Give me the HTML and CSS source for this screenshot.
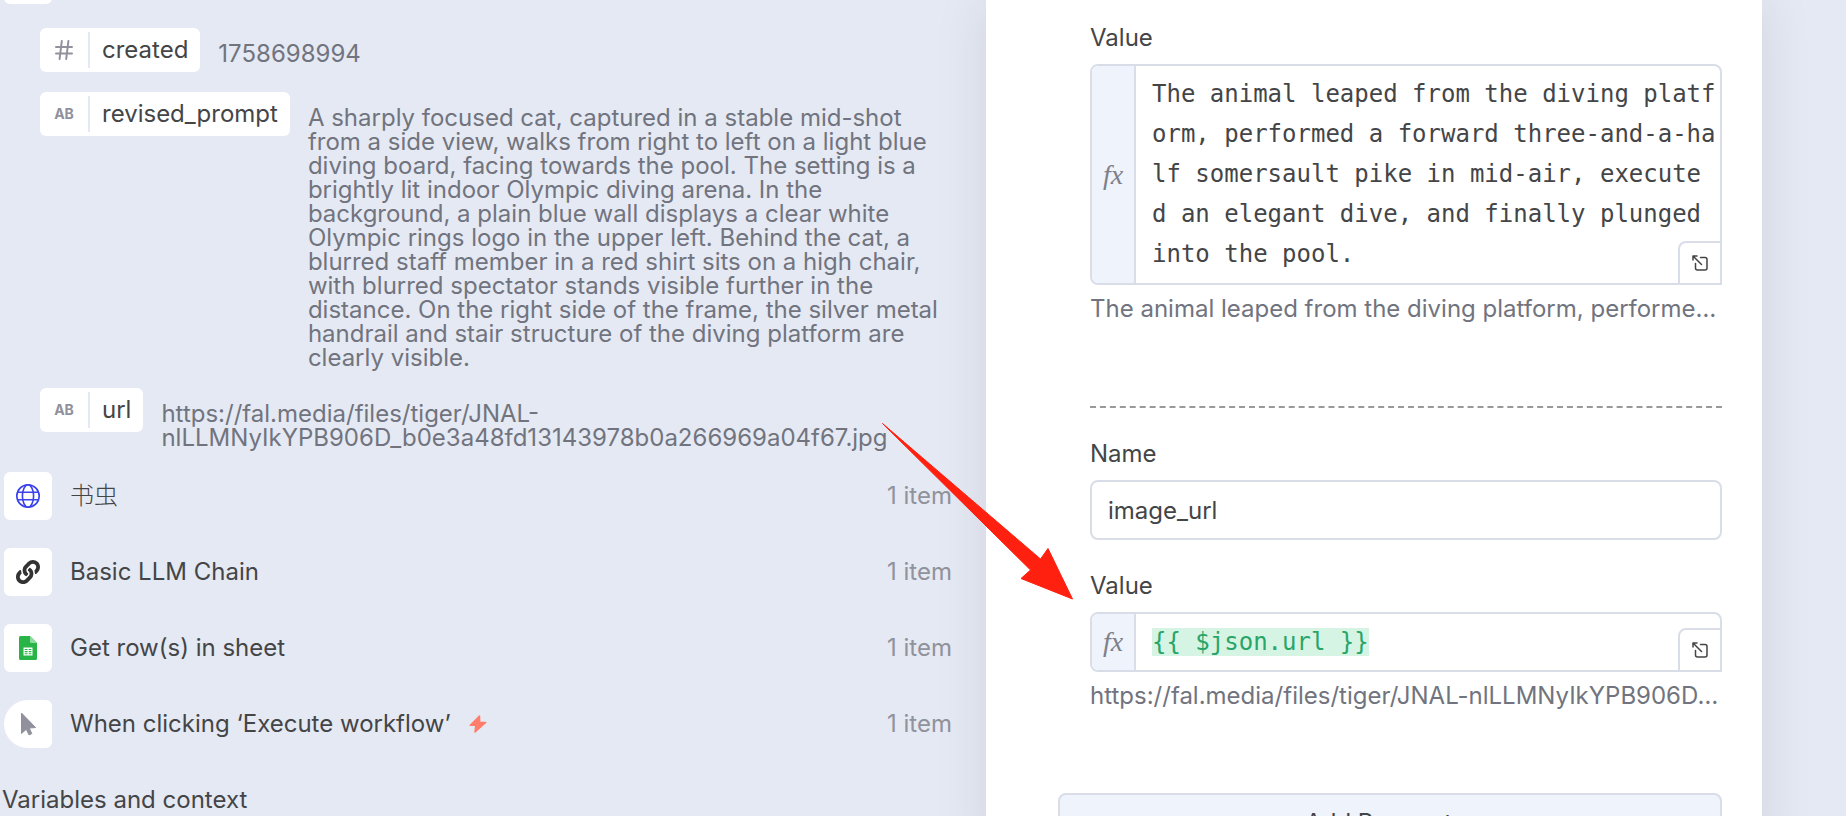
FILE: index.html
```
<!DOCTYPE html>
<html lang="en">
<head>
<meta charset="utf-8">
<title>Edit Fields</title>
<link rel="stylesheet" href="styles.css">
</head>
<body>
<main class="workspace">
  <section class="inputs" aria-label="Input data">
    <div class="tile"></div>
    <ul class="fields">
      <li class="field">
        <span class="chip">
          <span class="chip-type">
            <svg width="18" height="20" viewBox="0 0 18 20" fill="none" stroke="currentColor" stroke-width="2" stroke-linecap="round"><path d="M1 7h16M1 13.500h16M6.800 1L4.600 19M13.400 1l-2.200 18"/></svg>
          </span>
          <span class="chip-name">created</span>
        </span>
        <span class="field-value">1758698994</span>
      </li>
      <li class="field">
        <span class="chip"><span class="chip-type">AB</span><span class="chip-name">revised_prompt</span></span>
        <span class="field-value">A sharply focused cat, captured in a stable mid-shot from a side view, walks from right to left on a light blue diving board, facing towards the pool. The setting is a brightly lit indoor Olympic diving arena. In the background, a plain blue wall displays a clear white Olympic rings logo in the upper left. Behind the cat, a blurred staff member in a red shirt sits on a high chair, with blurred spectator stands visible further in the distance. On the right side of the frame, the silver metal handrail and stair structure of the diving platform are clearly visible.</span>
      </li>
      <li class="field">
        <span class="chip"><span class="chip-type">AB</span><span class="chip-name">url</span></span>
        <span class="field-value">https://fal.media/files/tiger/JNAL-nlLLMNyIkYPB906D_b0e3a48fd13143978b0a266969a04f67.jpg</span>
      </li>
    </ul>
    <ul class="nodes">
      <li class="node">
        <span class="tile">
          <svg width="24" height="24" viewBox="0 0 24 24" fill="none" stroke="#3a42e9" stroke-width="1.600"><circle cx="12" cy="12" r="11.200"/><ellipse cx="12" cy="12" rx="5.600" ry="11.200"/><path d="M1.500 8.300h21M1.500 15.700h21"/></svg>
        </span>
        <span class="node-name node-name-cjk">书虫</span>
        <span class="node-count">1 item</span>
      </li>
      <li class="node">
        <span class="tile">
          <svg width="24" height="24" viewBox="0 0 512 512" fill="#333"><path d="M326.612 185.391c59.747 59.809 58.927 155.698.36 214.590-.11.120-.240.250-.360.370l-67.200 67.200c-59.270 59.270-155.699 59.262-214.960 0-59.270-59.260-59.270-155.700 0-214.960l37.106-37.106c9.840-9.840 26.786-3.300 27.294 10.606.648 17.722 3.826 35.527 9.690 52.721 1.986 5.822.567 12.262-3.783 16.612l-13.087 13.087c-28.026 28.026-28.905 73.660-1.155 101.960 28.024 28.579 74.086 28.749 102.325.510l67.200-67.190c28.191-28.191 28.073-73.757 0-101.830-3.701-3.694-7.429-6.564-10.341-8.569a16.037 16.037 0 0 1-6.947-12.606c-.396-10.567 3.348-21.456 11.698-29.806l21.054-21.055c5.521-5.521 14.182-6.199 20.584-1.731a152.482 152.482 0 0 1 20.522 17.197zM467.547 44.449c-59.261-59.262-155.690-59.270-214.960 0l-67.200 67.200c-.120.120-.250.250-.360.370-58.566 58.892-59.387 154.781.360 214.590a152.454 152.454 0 0 0 20.521 17.196c6.402 4.468 15.064 3.789 20.584-1.731l21.054-21.055c8.350-8.350 12.094-19.239 11.698-29.806a16.037 16.037 0 0 0-6.947-12.606c-2.912-2.005-6.640-4.875-10.341-8.569-28.073-28.073-28.191-73.639 0-101.830l67.200-67.190c28.239-28.239 74.300-28.069 102.325.510 27.750 28.300 26.872 73.934-1.155 101.960l-13.087 13.087c-4.350 4.350-5.769 10.790-3.783 16.612 5.864 17.194 9.042 34.999 9.690 52.721.509 13.906 17.454 20.446 27.294 10.606l37.106-37.106c59.271-59.259 59.271-155.699.001-214.959z"/></svg>
        </span>
        <span class="node-name">Basic LLM Chain</span>
        <span class="node-count">1 item</span>
      </li>
      <li class="node">
        <span class="tile">
          <svg width="24" height="24" viewBox="0 0 24 24"><path d="M4.500 0H14l7 7V22.500q0 1.500-1.500 1.500h-15q-1.500 0-1.500-1.500v-21q0-1.500 1.500-1.500z" fill="#28b446"/><path d="M14 0l7 7h-5.500q-1.500 0-1.500-1.500z" fill="#8fdba0"/><path d="M7.500 11.500h9v8h-9z" fill="#fff"/><path d="M8.700 12.900h2.900v1.200H8.700zM12.700 12.900h2.700v1.200h-2.700zM8.700 15.100h2.900v1.200H8.700zM12.700 15.100h2.700v1.200h-2.700zM8.700 17.200h2.900v1.100H8.700zM12.700 17.200h2.700v1.100h-2.700z" fill="#28b446"/></svg>
        </span>
        <span class="node-name">Get row(s) in sheet</span>
        <span class="node-count">1 item</span>
      </li>
      <li class="node">
        <span class="tile tile-trigger">
          <svg width="24" height="24" viewBox="0 0 24 24" fill="#90919c" stroke="#90919c" stroke-linejoin="round"><path d="M5.500 1v20.500l4.800-4.200 2.700 5.600 2.800-1.300-2.600-5.500 6.300-.600z"/></svg>
        </span>
        <span class="node-name">When clicking ‘Execute workflow’
          <svg width="18" height="18" viewBox="0 0 18 18" fill="#ff7d6b" stroke="#ff7d6b" stroke-width="1.500" stroke-linejoin="round"><path d="M10.500 1L1.300 10.300h5.500L6 17l10.700-9.600h-6z"/></svg>
        </span>
        <span class="node-count">1 item</span>
      </li>
    </ul>
    <h2 class="context-title">Variables and context</h2>
  </section>

  <section class="panel" aria-label="Parameters">
    <form class="params">
      <div class="param">
        <label class="label" for="prompt-value">Value</label>
        <div class="editor">
          <span class="fx">fx</span>
          <textarea class="code code-multiline" id="prompt-value" rows="5" spellcheck="false">The animal leaped from the diving platf
orm, performed a forward three-and-a-ha
lf somersault pike in mid-air, execute
d an elegant dive, and finally plunged 
into the pool.</textarea>
          <button class="expand" type="button" aria-label="Open editor">
            <svg width="16" height="16" viewBox="0 0 16 16" fill="none" stroke="#444" stroke-width="1.500" stroke-linecap="round" stroke-linejoin="round"><path d="M1 5V1h4M1 1l8.500 8.500M8.500 2.500H13q2 0 2 2V13q0 2-2 2H5.500q-2 0-2-2V8.500"/></svg>
          </button>
        </div>
        <p class="hint">The animal leaped from the diving platform, performed a forward three-and-a-half somersault pike in mid-air</p>
      </div>
      <hr class="divider">
      <div class="param">
        <label class="label" for="field-name">Name</label>
        <input class="text" id="field-name" type="text" value="image_url">
      </div>
      <div class="param">
        <span class="label" id="url-label">Value</span>
        <div class="editor">
          <span class="fx">fx</span>
          <div class="code" role="textbox" contenteditable="true" spellcheck="false" aria-labelledby="url-label"><span class="expression">{{ $json.url }}</span></div>
          <button class="expand" type="button" aria-label="Open editor">
            <svg width="16" height="16" viewBox="0 0 16 16" fill="none" stroke="#444" stroke-width="1.500" stroke-linecap="round" stroke-linejoin="round"><path d="M1 5V1h4M1 1l8.500 8.500M8.500 2.500H13q2 0 2 2V13q0 2-2 2H5.500q-2 0-2-2V8.500"/></svg>
          </button>
        </div>
        <p class="hint">https://fal.media/files/tiger/JNAL-nlLLMNyIkYPB906D_b0e3a48fd13143978b0a266969a04f67.jpg</p>
      </div>
      <button class="add" type="button">Add Parameter</button>
    </form>
    <svg class="arrow" width="194" height="180" viewBox="0 0 194 180" fill="#ff2010" stroke="#ff2010" stroke-linejoin="round"><path d="M2.500 2.500L160.500 138l7.500-10.500 24.500 50.500-51.500-20.500 9.500-8.500z"/></svg>
  </section>
</main>
</body>
</html>
```
FILE: styles.css
```
* {
  box-sizing: border-box;
}

body {
  margin: 0;
  height: 100vh;
  overflow: hidden;
  background: #e5e9f3;
  color: #444547;
  font: 24px/30px Inter, "Noto Sans CJK SC", sans-serif;
}

ul {
  margin: 0;
  padding: 0;
  list-style: none;
}

.workspace {
  display: grid;
  grid-template-columns: minmax(0, 986fr) minmax(0, 776fr) minmax(0, 84fr);
  height: 100%;
}

/* Input data */
.inputs {
  margin-top: -44px;
  padding: 0 34px 0 2px;
}

.tile {
  display: flex;
  flex: none;
  align-items: center;
  justify-content: center;
  width: 48px;
  height: 48px;
  margin-left: 2px;
  border-radius: 6px;
  background: #fff;
}

.tile-trigger {
  border-radius: 24px 6px 6px 24px;
}

.fields {
  display: flex;
  flex-direction: column;
  gap: 18px;
  padding: 24px 0 22px 38px;
}

.field {
  display: flex;
  align-items: flex-start;
  gap: 18px;
  min-height: 46px;
}

.chip {
  display: flex;
  flex: none;
  align-items: center;
  height: 44px;
  padding-right: 12px;
  border-radius: 6px;
  background: #fff;
}

.chip-type {
  display: flex;
  align-items: center;
  justify-content: center;
  width: 50px;
  height: 36px;
  border-right: 2px solid #e5e9f3;
  color: #90919c;
  font-size: 14px;
  font-weight: 700;
}

.chip-name {
  padding-left: 12px;
}

.field-value {
  padding-top: 14px;
  color: #71747e;
  line-height: 24px;
}

.nodes {
  display: flex;
  flex-direction: column;
  gap: 28px;
}

.node {
  display: flex;
  align-items: center;
}

.node-name {
  display: flex;
  flex: 1;
  align-items: center;
  gap: 18px;
  padding-left: 18px;
}

.node-name-cjk {
  font-weight: 300;
}

.node-count {
  color: #90929c;
}

.context-title {
  margin: 37px 0 0;
  font-size: 24px;
  font-weight: 400;
}

/* Parameters */
.panel {
  position: relative;
  padding: 23px 40px 0 72px;
  background: #fff;
  box-shadow: 0 0 50px rgba(30, 40, 60, 0.1);
}

.params {
  display: flex;
  flex-direction: column;
}

.param {
  min-width: 0;
  margin: 0 0 31px 32px;
}

.label {
  display: block;
  margin-bottom: 11px;
}

.editor {
  position: relative;
  display: flex;
  border: 2px solid #d9dde8;
  border-radius: 8px;
}

.fx {
  display: flex;
  flex: none;
  align-items: center;
  justify-content: center;
  width: 44px;
  border-right: 2px solid #d9dde8;
  border-radius: 6px 0 0 6px;
  background: #eff3fc;
  color: #7d808a;
  font: italic 28px/30px "Liberation Serif", serif;
}

.code {
  flex: 1;
  min-width: 0;
  margin: 0;
  padding: 8px 0 8px 16px;
  border: 0;
  outline: 0;
  overflow: hidden;
  resize: none;
  background: transparent;
  color: #444547;
  font: 24px/40px "DejaVu Sans Mono", monospace;
  white-space: pre;
}

.code-multiline {
  padding-bottom: 9px;
}

.expression {
  background: #d6f4e4;
  color: #29a568;
}

.expand {
  position: absolute;
  right: -2px;
  bottom: -2px;
  display: flex;
  align-items: center;
  justify-content: center;
  width: 44px;
  height: 44px;
  padding: 0;
  border: 2px solid #d9dde8;
  border-radius: 8px 0 0 0;
  background: #fff;
}

.hint {
  margin: 9px 0 51px;
  overflow: hidden;
  color: #71747e;
  text-overflow: ellipsis;
  white-space: nowrap;
}

.divider {
  align-self: stretch;
  margin: 0 0 31px 32px;
  border: 0;
  border-top: 2px dashed #999;
}

.text {
  display: block;
  width: 100%;
  height: 60px;
  padding: 0 16px;
  border: 2px solid #d9dde8;
  border-radius: 8px;
  background: #fff;
  color: inherit;
  font: inherit;
}

.add {
  height: 60px;
  border: 2px solid #d9dde8;
  border-radius: 8px;
  background: #eff3fc;
  color: inherit;
  font: inherit;
}

/* Callout lying over both columns */
.arrow {
  position: absolute;
  top: 421px;
  left: -106px;
}
```
